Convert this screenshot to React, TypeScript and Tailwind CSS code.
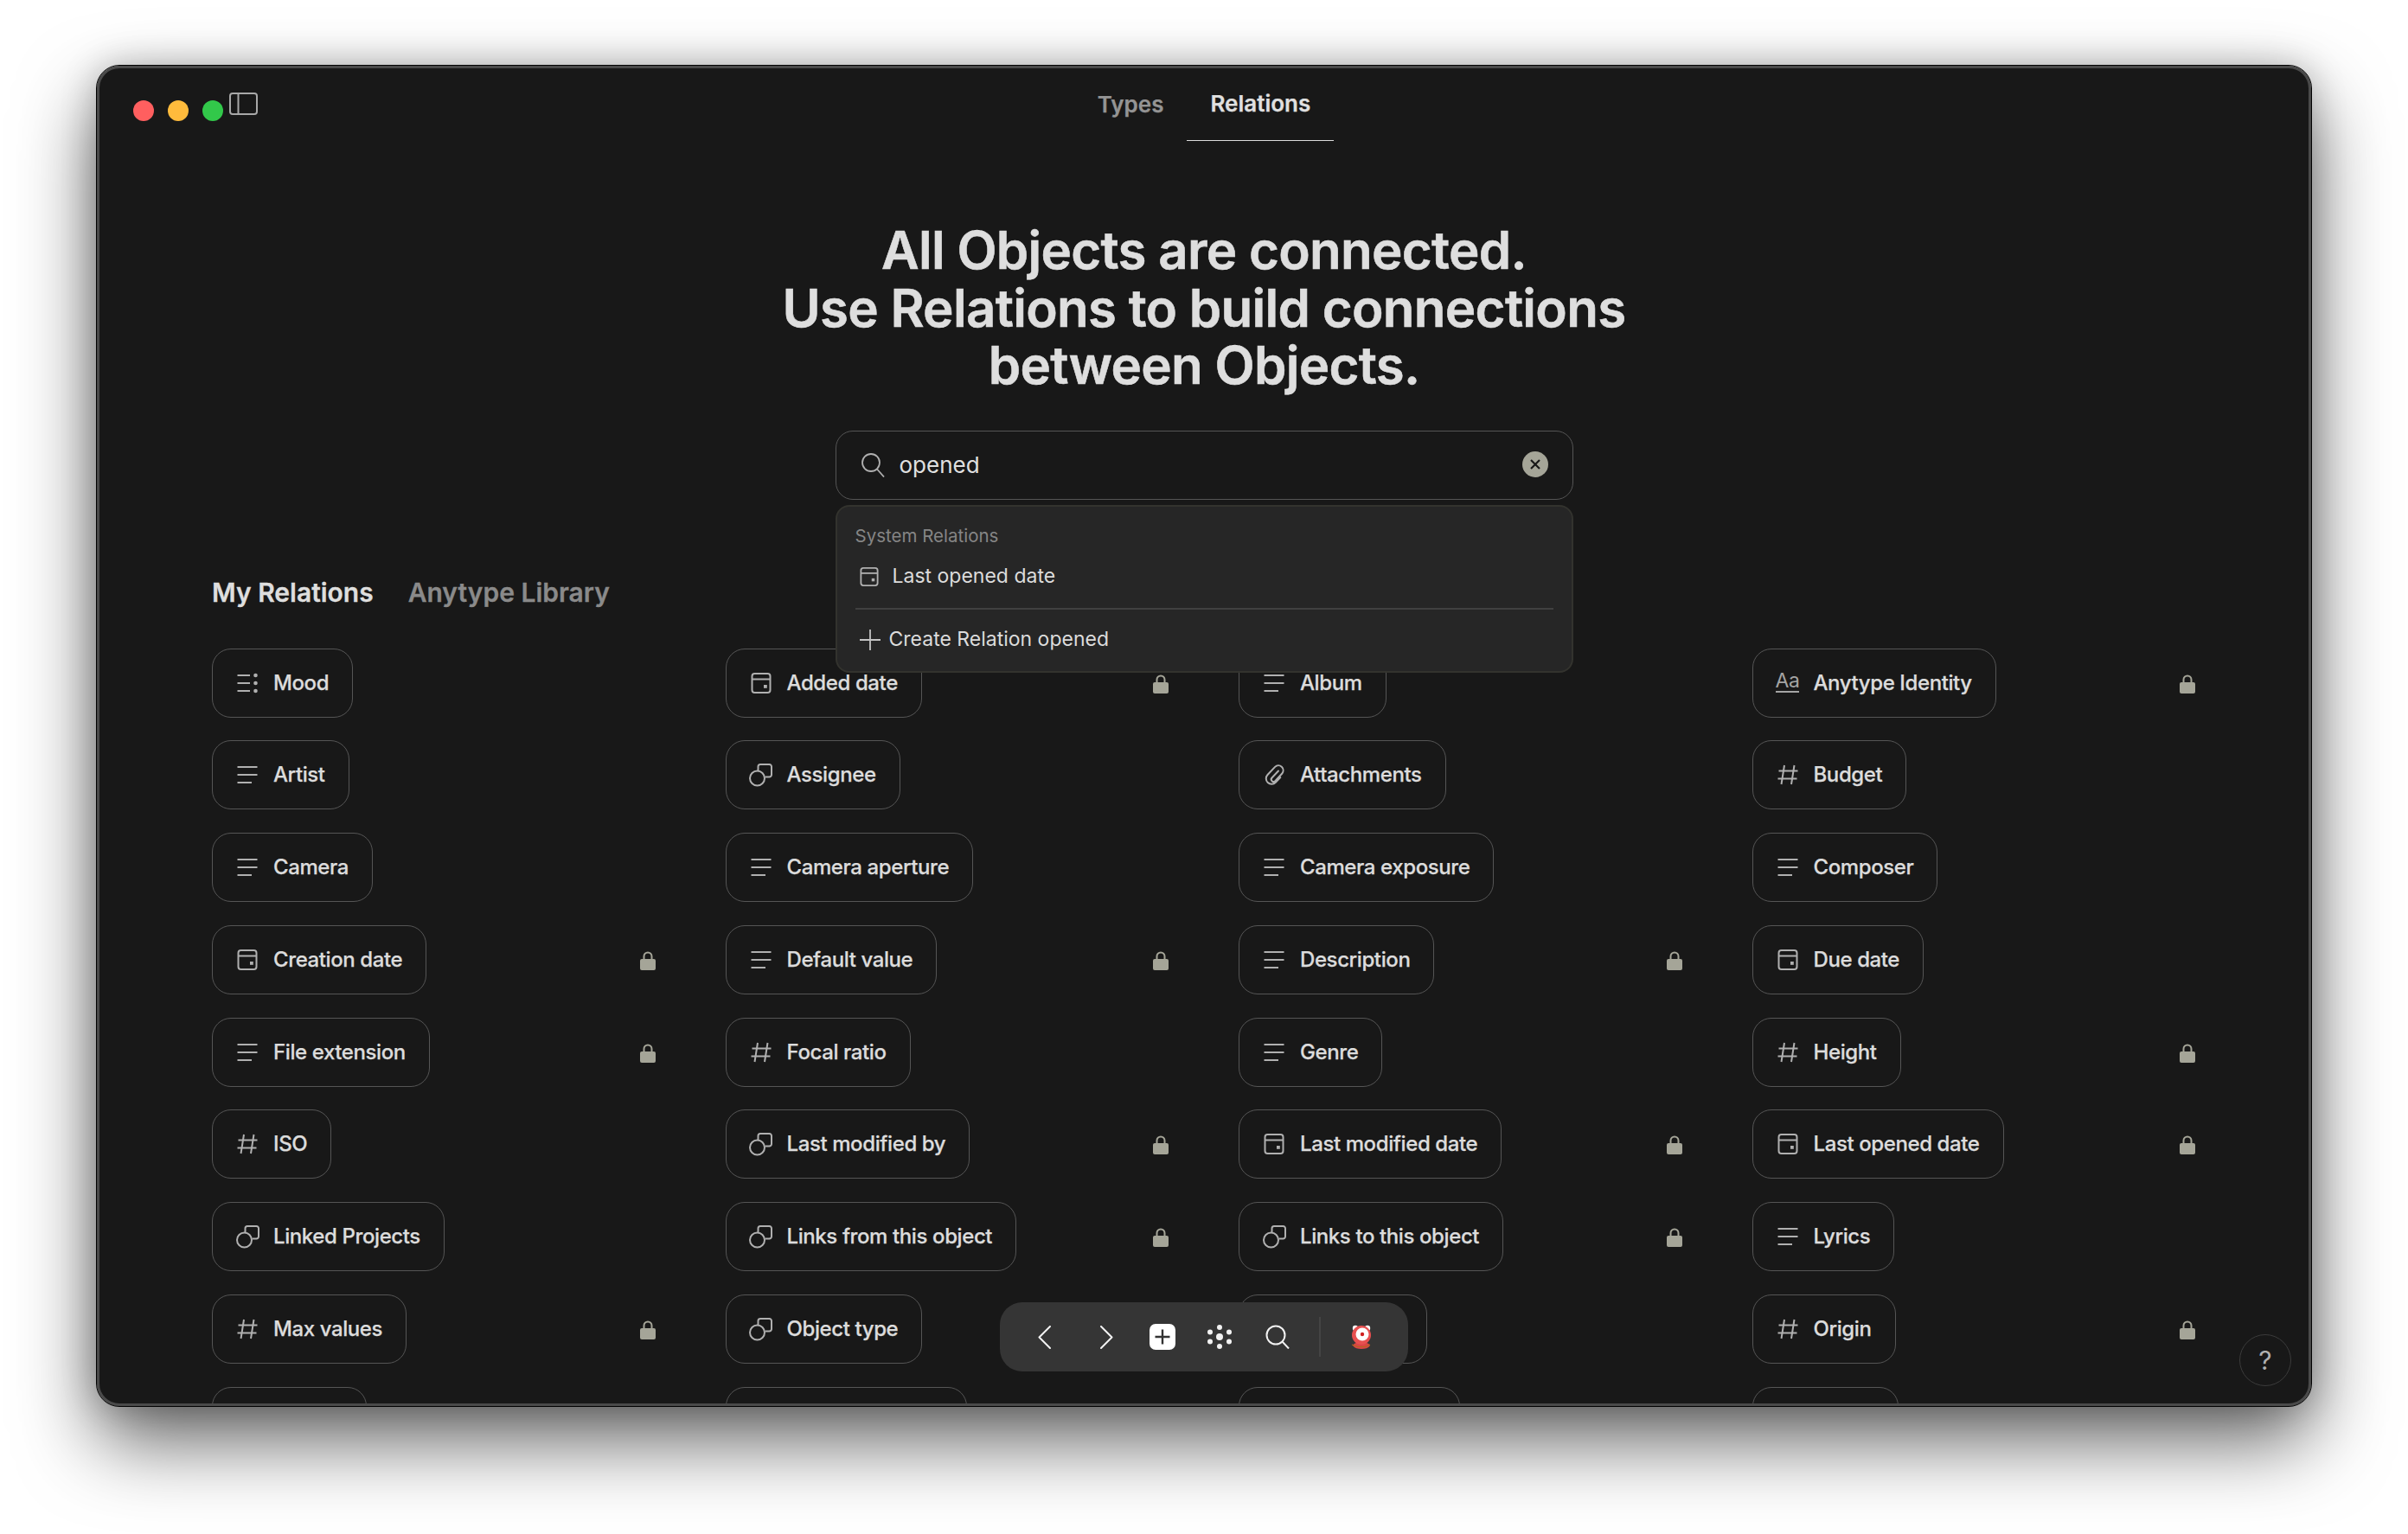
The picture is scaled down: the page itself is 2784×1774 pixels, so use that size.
import React from "react";

type Kind = "text" | "mood" | "date" | "object" | "number" | "clip" | "aa";
type Item = { label: string; kind?: Kind; lock?: boolean; w?: string };

const ICON = "#b0b0b0";

const TextIcon = () => (
  <svg width="24" height="24" viewBox="0 0 24 24" fill="none" stroke={ICON} strokeWidth="2">
    <path d="M0.500 3H23.500M0.500 12H23.500M0.500 21H17" />
  </svg>
);
const MoodIcon = () => (
  <svg width="24" height="24" viewBox="0 0 24 24" fill="none" stroke={ICON} strokeWidth="2">
    <path d="M0.500 3H15M0.500 12H15M0.500 21H15" />
    <g fill={ICON} stroke="none">
      <circle cx="21.500" cy="3" r="2.300" />
      <circle cx="21.500" cy="12" r="2.300" />
      <circle cx="21.500" cy="21" r="2.300" />
    </g>
  </svg>
);
const DateIcon = ({ size = 24 }: { size?: number }) => (
  <svg width={size} height={size} viewBox="0 0 24 24" fill="none" stroke={ICON} strokeWidth="2">
    <rect x="1.500" y="1" width="21" height="22" rx="3" />
    <path d="M1.500 7.500H22.500" />
    <rect x="15" y="14" width="3.800" height="3.800" fill={ICON} stroke="none" />
  </svg>
);
const ObjectIcon = () => (
  <svg width="27" height="27" viewBox="0 0 27 27" fill="none" stroke={ICON} strokeWidth="2" className="shrink-0">
    <path d="M10.500 9V3.500A2.500 2.500 0 0 1 13 1H23.500A2.500 2.500 0 0 1 26 3.500V13A2.500 2.500 0 0 1 23.500 15.500H18.500" />
    <circle cx="9.500" cy="17" r="8.500" />
  </svg>
);
const NumberIcon = () => (
  <svg width="24" height="24" viewBox="0 0 24 24" fill="none" stroke={ICON} strokeWidth="2">
    <path d="M8 1L4.500 23M19.500 1L16 23M1.500 7.500H23.500M0.500 16.500H22.500" />
  </svg>
);
const ClipIcon = () => (
  <svg width="25" height="27" viewBox="0 0 25 27" fill="none" stroke={ICON} strokeWidth="2" strokeLinecap="round" className="shrink-0">
    <path d="M17 8.500L9.500 16.500a2.600 2.600 0 0 0 3.800 3.600l8-8.600a5.600 5.600 0 0 0-8.200-7.600L4.500 13a6.400 6.400 0 0 0 9.300 8.800l5.500-5.800" />
  </svg>
);
const AaIcon = () => (
  <span className="flex flex-col items-center w-[27px] shrink-0 text-[23px] leading-[24px] text-[#a4a4a4]">
    <span className="tracking-[-0.5px] -mt-[3px]">Aa</span>
    <span className="block w-[27px] h-[2px] bg-[#a4a4a4]" />
  </span>
);
const LockIcon = () => (
  <svg width="18" height="22" viewBox="0 0 18 22" className="block">
    <path d="M4.500 10V6a4.500 4.500 0 0 1 9 0v4" fill="none" stroke="#a5a598" strokeWidth="2" />
    <rect x="0" y="9" width="18" height="13" rx="2" fill="#a5a598" />
  </svg>
);

const Icon = ({ kind }: { kind?: Kind }) => {
  if (kind === "text") return <TextIcon />;
  if (kind === "mood") return <MoodIcon />;
  if (kind === "date") return <DateIcon />;
  if (kind === "object") return <ObjectIcon />;
  if (kind === "number") return <NumberIcon />;
  if (kind === "clip") return <ClipIcon />;
  if (kind === "aa") return <AaIcon />;
  return null;
};

const rows: Item[][] = [
  [
    { label: "Mood", kind: "mood" },
    { label: "Added date", kind: "date", lock: true },
    { label: "Album", kind: "text" },
    { label: "Anytype Identity", kind: "aa", lock: true },
  ],
  [
    { label: "Artist", kind: "text" },
    { label: "Assignee", kind: "object" },
    { label: "Attachments", kind: "clip" },
    { label: "Budget", kind: "number" },
  ],
  [
    { label: "Camera", kind: "text" },
    { label: "Camera aperture", kind: "text" },
    { label: "Camera exposure", kind: "text" },
    { label: "Composer", kind: "text" },
  ],
  [
    { label: "Creation date", kind: "date", lock: true },
    { label: "Default value", kind: "text", lock: true },
    { label: "Description", kind: "text", lock: true },
    { label: "Due date", kind: "date" },
  ],
  [
    { label: "File extension", kind: "text", lock: true },
    { label: "Focal ratio", kind: "number" },
    { label: "Genre", kind: "text" },
    { label: "Height", kind: "number", lock: true },
  ],
  [
    { label: "ISO", kind: "number" },
    { label: "Last modified by", kind: "object", lock: true },
    { label: "Last modified date", kind: "date", lock: true },
    { label: "Last opened date", kind: "date", lock: true },
  ],
  [
    { label: "Linked Projects", kind: "object" },
    { label: "Links from this object", kind: "object", lock: true },
    { label: "Links to this object", kind: "object", lock: true },
    { label: "Lyrics", kind: "text" },
  ],
  [
    { label: "Max values", kind: "number", lock: true },
    { label: "Object type", kind: "object" },
    { label: "", w: "w-[218px]" },
    { label: "Origin", kind: "number", lock: true },
  ],
  [
    { label: "", w: "w-[179px]" },
    { label: "", w: "w-[279px]" },
    { label: "", w: "w-[256px]" },
    { label: "", w: "w-[169px]" },
  ],
];

const Row = ({ item }: { item: Item }) => (
  <div className="flex items-center h-[80px] pr-[81px]">
    <div className={`flex items-center h-[80px] shrink-0 rounded-[22px] border border-[#555] pl-[28px] pr-[27px] gap-[18px] ${item.w ?? ""}`}>
      {item.kind && (
        <span className="w-[24px] h-[27px] flex items-center justify-center shrink-0">
          <Icon kind={item.kind} />
        </span>
      )}
      {item.label && (
        <span className="text-[24px] leading-[32px] font-medium text-[#dcdcdc] whitespace-nowrap tracking-[-0.4px] [-webkit-text-stroke:0.25px_#dcdcdc]">
          {item.label}
        </span>
      )}
    </div>
    {item.lock && (
      <span className="ml-auto block translate-y-[1px]">
        <LockIcon />
      </span>
    )}
  </div>
);

export default function App() {
  return (
    <div
      className="w-[2784px] h-[1774px] bg-white pl-[112px] pt-[76px] overflow-hidden"
      style={{ fontFamily: "Inter, 'Noto Sans', sans-serif" }}
    >
      <div className="relative w-[2560px] h-[1550px] rounded-[26px] bg-[#181818] border-[3px] border-[#4a4a4a] outline outline-1 outline-black overflow-hidden flex flex-col shadow-[0_40px_90px_rgba(0,0,0,0.62),0_0_40px_rgba(0,0,0,0.22)]">
        {/* Title bar */}
        <div className="grid grid-cols-[1fr_auto_1fr] h-[90px] shrink-0">
          <div className="flex items-start pl-[39px]">
            <div className="flex gap-[16px] mt-[37px]">
              <span className="w-[24px] h-[24px] rounded-full bg-[#ff5f5f]" />
              <span className="w-[24px] h-[24px] rounded-full bg-[#ffbb3c]" />
              <span className="w-[24px] h-[24px] rounded-full bg-[#32c84a]" />
            </div>
            <svg width="33" height="26" viewBox="0 0 33 26" fill="none" stroke="#a8a8a8" strokeWidth="2" className="ml-[7px] mt-[28px]">
              <rect x="1" y="1" width="31" height="24" rx="3" />
              <path d="M10.500 1V25" />
            </svg>
          </div>
          <div className="flex h-[84px] text-[26px] font-semibold">
            <div className="px-[27px] flex items-center justify-center h-[84px] pb-[2px] text-[#949494] [-webkit-text-stroke:0.25px_#949494]">Types</div>
            <div className="px-[27px] flex items-center justify-center h-[84px] pb-[2px] text-[#e0e0e0] border-b border-[#dcdcdc] [-webkit-text-stroke:0.25px_#e0e0e0]">Relations</div>
          </div>
          <div />
        </div>

        {/* Heading */}
        <h1 className="mt-[87px] text-center text-[60px] leading-[66.5px] font-semibold text-[#dedede] tracking-[-0.7px] [-webkit-text-stroke:0.6px_#dedede]">
          All Objects are connected.
          <br />
          Use Relations to build connections
          <br />
          between Objects.
        </h1>

        {/* Search */}
        <div className="mx-auto mt-[42px] w-[853px]">
          <div className="flex items-center h-[80px] rounded-[20px] border border-[#555] pl-[29px] pr-[28px]">
            <svg width="27" height="28" viewBox="0 0 27 28" fill="none" stroke="#b0b0b0" strokeWidth="1.800" className="shrink-0">
              <circle cx="11" cy="11" r="10" />
              <path d="M18 18.500L26 27.500" />
            </svg>
            <span className="ml-[17px] text-[26px] text-[#e0e0e0]">opened</span>
            <span className="ml-auto w-[30px] h-[30px] rounded-full bg-[#a5a598] flex items-center justify-center -translate-y-[1px]">
              <svg width="14" height="14" viewBox="0 0 14 14" fill="none" stroke="#181818" strokeWidth="2.200">
                <path d="M2 2L12 12M12 2L2 12" />
              </svg>
            </span>
          </div>
        </div>

        <div className="relative flex-1 min-h-0">
          {/* Dropdown */}
          <div className="absolute z-10 left-[850.5px] top-[6px] w-[853px] h-[194px] rounded-[16px] bg-[#262626] border-2 border-[#33332e] px-[21px] pt-[19px]">
            <div className="text-[20.5px] leading-[30px] text-[#858585]">System Relations</div>
            <div className="flex items-center h-[50px] mt-[7px] pl-[5px] gap-[16px] text-[23px] text-[#dcdcdc]">
              <DateIcon size={22} />
              <span>Last opened date</span>
            </div>
            <div className="h-[2px] bg-[#404040] mt-[11px]" />
            <div className="flex items-center h-[60px] mt-[5px] pl-[5px] gap-[10px] text-[23px] text-[#dcdcdc]">
              <svg width="24" height="24" viewBox="0 0 24 24" fill="none" stroke="#c4c4c4" strokeWidth="1.800">
                <path d="M12 0V24M0 12H24" />
              </svg>
              <span>Create Relation opened</span>
            </div>
          </div>

          {/* Section tabs */}
          <div className="flex items-center gap-[40px] pl-[130px] pt-[85px] text-[30px] font-semibold leading-[44px]">
            <span className="text-[#dedede] [-webkit-text-stroke:0.3px_#dedede]">My Relations</span>
            <span className="text-[#8a8a8a] [-webkit-text-stroke:0.3px_#8a8a8a]">Anytype Library</span>
          </div>

          {/* Grid */}
          <div className="grid grid-cols-[593.5px_593.5px_593.5px_593.5px] gap-y-[26.8px] pl-[130px] pt-[43px]">
            {rows.map((r, i) => r.map((item, j) => <Row key={`${i}-${j}`} item={item} />))}
          </div>
        </div>

        {/* Floating bar */}
        <div className="absolute z-20 left-[1041px] top-[1427px] w-[472px] h-[80px] rounded-[26px] bg-[#353535] flex items-center pl-[44px]">
          <svg width="15" height="27" viewBox="0 0 15 27" fill="none" stroke="#f2f2f2" strokeWidth="2" strokeLinecap="round" strokeLinejoin="round" className="shrink-0">
            <path d="M14 1L1.500 13.500L14 26" />
          </svg>
          <svg width="15" height="27" viewBox="0 0 15 27" fill="none" stroke="#f2f2f2" strokeWidth="2" strokeLinecap="round" strokeLinejoin="round" className="shrink-0 ml-[57px]">
            <path d="M1 1L13.500 13.500L1 26" />
          </svg>
          <span className="ml-[42px] w-[30px] h-[30px] rounded-[7px] bg-white flex items-center justify-center shrink-0">
            <svg width="18" height="18" viewBox="0 0 18 18" fill="none" stroke="#333" strokeWidth="2.400">
              <path d="M9 0.500V17.500M0.500 9H17.500" />
            </svg>
          </span>
          <svg width="28" height="28" viewBox="0 0 28 28" fill="#f2f2f2" className="ml-[37px] shrink-0">
            <circle cx="14" cy="14" r="4" />
            <circle cx="14" cy="3" r="3" />
            <circle cx="14" cy="25" r="3" />
            <circle cx="3" cy="8.500" r="3" />
            <circle cx="25" cy="8.500" r="3" />
            <circle cx="3" cy="19.500" r="3" />
            <circle cx="25" cy="19.500" r="3" />
          </svg>
          <svg width="28" height="28" viewBox="0 0 28 28" fill="none" stroke="#f2f2f2" strokeWidth="2" className="ml-[39px] shrink-0">
            <circle cx="12" cy="12" r="10.500" />
            <path d="M19.500 19.500L27 27.500" />
          </svg>
          <span className="ml-[34px] w-[2px] h-[46px] bg-[#444] shrink-0" />
          <svg width="24" height="28" viewBox="0 0 24 28" className="ml-[35px] shrink-0">
            <circle cx="5" cy="4" r="3.200" fill="#fff" />
            <circle cx="19" cy="4" r="3.200" fill="#fff" />
            <path d="M2 24C4 21 7 20 12 20C17 20 20 21 22 24C20 27 16 28 12 28C8 28 4 27 2 24Z" fill="#d94545" />
            <circle cx="12" cy="12" r="11" fill="#e85050" />
            <circle cx="13" cy="11" r="7.500" fill="#fff" />
            <circle cx="13" cy="11" r="2.200" fill="#d02020" />
            <path d="M1 23L8 25.500H16L22 23" fill="none" stroke="#b5651d" strokeWidth="1.200" />
          </svg>
        </div>

        {/* Help */}
        <div className="absolute z-20 left-[2474px] top-[1464px] w-[60px] h-[60px] rounded-full border border-[#3c3c3c] flex items-center justify-center text-[30px] text-[#b0b0b0]">
          ?
        </div>
      </div>
    </div>
  );
}
